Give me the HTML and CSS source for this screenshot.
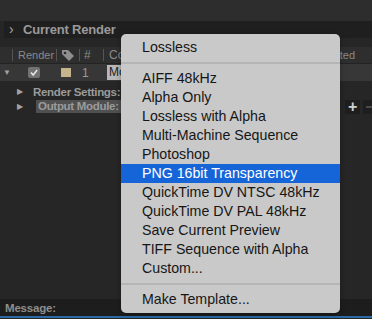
FILE: index.html
```html
<!DOCTYPE html>
<html>
<head>
<meta charset="utf-8">
<link rel="stylesheet" href="styles.css">
</head>
<body>
<div class="app">
  <div class="topstrip"></div>
  <div class="panel-head"><span class="chev">›</span><span class="title">Current Render</span></div>
  <div class="gap"></div>
  <div class="cols">
    <span class="sep s1"></span>
    <span class="col-render">Render</span>
    <span class="sep s2"></span>
    <svg class="tag" width="14" height="12" viewBox="0 0 14 12"><path d="M1 1 H7 L13 7 L8 12 L1 5 Z" fill="#8e8e8e"/><circle cx="4" cy="4" r="1.3" fill="#2c2c2c"/></svg>
    <span class="sep s3"></span>
    <span class="col-num">#</span>
    <span class="sep s4"></span>
    <span class="col-comp">Co</span>
    <span class="fill"></span>
    <span class="col-started">Started</span>
  </div>
  <div class="row1">
    <span class="tri-down">▼</span>
    <span class="check"><svg width="12" height="11" viewBox="0 0 12 11"><path d="M3 5.5 L5.2 8 L9.2 3" fill="none" stroke="#e6e6e6" stroke-width="1.6"/></svg></span>
    <span class="swatch"></span>
    <span class="num">1</span>
    <span class="comp">Mo</span>
  </div>
  <div class="sub first">
    <span class="tri-right">▶</span><span class="label">Render Settings:</span>
  </div>
  <div class="sub">
    <span class="tri-right">▶</span><span class="label hl">Output Module:</span>
    <span class="fill"></span>
    <span class="btn">+</span><span class="btn minus"></span>
  </div>
  <div class="spacer"></div>
  <div class="message"><span>Message:</span></div>
  <div class="blue"></div>
</div>

<div class="menu">
  <div class="item">Lossless</div>
  <div class="divider"></div>
  <div class="item">AIFF 48kHz</div>
  <div class="item">Alpha Only</div>
  <div class="item">Lossless with Alpha</div>
  <div class="item">Multi-Machine Sequence</div>
  <div class="item">Photoshop</div>
  <div class="item selected">PNG 16bit Transparency</div>
  <div class="item">QuickTime DV NTSC 48kHz</div>
  <div class="item">QuickTime DV PAL 48kHz</div>
  <div class="item">Save Current Preview</div>
  <div class="item">TIFF Sequence with Alpha</div>
  <div class="item">Custom...</div>
  <div class="divider"></div>
  <div class="item">Make Template...</div>
</div>
</body>
</html>
```

FILE: styles.css
```css
html, body {
  margin: 0;
  padding: 0;
  width: 372px;
  height: 319px;
  overflow: hidden;
  background: #262626;
}
.app {
  position: relative;
  width: 372px;
  height: 319px;
  display: flex;
  flex-direction: column;
  font-family: "Liberation Sans", Arial, sans-serif;
}
.topstrip {
  height: 21px;
  background: #2d2d2d;
}
.panel-head {
  height: 17px;
  margin-left: 4px;
  background: #1f1f1f;
  display: flex;
  align-items: center;
  color: #9a9a9a;
}
.chev {
  font-size: 14px;
  width: 19px;
  padding-left: 5px;
  box-sizing: border-box;
  color: #a8a8a8;
  line-height: 1;
  margin-top: -2px;
}
.title {
  font-weight: bold;
  font-size: 13px;
  letter-spacing: -0.2px;
}
.gap {
  height: 9px;
  background: #262626;
}
.cols {
  height: 16px;
  background: #2e2e2e;
  display: flex;
  align-items: center;
  color: #8a8a8a;
  font-size: 11px;
  border-bottom: 1px solid #232323;
}
.sep {
  flex: none;
  width: 1px;
  height: 12px;
  background: #555;
}
.s1 { margin-left: 12px; }
.col-render { margin-left: 5px; width: 38px; flex: none; }
.tag { margin-left: 4px; flex: none; }
.s3 { margin-left: 4px; }
.col-num { margin-left: 4px; width: 19px; flex: none; font-size: 12px; }
.col-comp { margin-left: 5px; font-size: 12px; }
.fill { flex: 1; }
.col-started { margin-right: 17px; }
.row1 {
  height: 17px;
  background: #373737;
  display: flex;
  align-items: center;
  font-size: 11px;
  color: #9a9a9a;
}
.tri-down {
  font-size: 8px;
  margin-left: 3px;
  width: 25px;
  color: #a0a0a0;
}
.check {
  width: 12px;
  height: 11px;
  background: #727272;
  border-radius: 2px;
  display: flex;
}
.swatch {
  width: 10px;
  height: 9px;
  background: #c6b48c;
  margin-left: 21px;
}
.num {
  margin-left: 11px;
  width: 14px;
  font-size: 12px;
}
.comp {
  margin-left: 11px;
  background: #b8b8b8;
  color: #222;
  font-size: 12px;
  padding: 0 3px 0 2px;
  height: 15px;
  line-height: 15px;
  width: 40px;
}
.sub {
  height: 15px;
  display: flex;
  align-items: center;
  color: #9b9b9b;
  font-size: 11.5px;
  font-weight: bold;
  letter-spacing: -0.3px;
}
.sub.first { margin-top: 3px; }
.tri-right {
  font-size: 8px;
  margin-left: 17px;
  width: 16px;
  color: #a3a3a3;
  font-weight: normal;
}
.label.hl {
  background: #505050;
  padding: 0 2px;
  margin-left: 3px;
  line-height: 13px;
}
.btn {
  width: 15px;
  height: 14px;
  background: #1e1e1e;
  color: #cfcfcf;
  font-size: 16px;
  line-height: 14px;
  text-align: center;
  font-weight: bold;
  margin-right: 3px;
  position: relative;
}
.btn.minus {
  margin-right: -6px;
}
.btn.minus::after {
  content: "";
  position: absolute;
  left: 3px;
  right: 3px;
  top: 6px;
  height: 2px;
  background: #4a4a4a;
}
.spacer {
  flex: 1;
  background: #262626;
}
.message {
  height: 17px;
  background: #1d1d1d;
  display: flex;
  align-items: center;
  color: #8e8e8e;
  font-size: 11.5px;
  font-weight: bold;
  padding-left: 5px;
  letter-spacing: -0.2px;
}
.blue {
  height: 2px;
  background: #2b6aa6;
  margin-bottom: 1px;
}

.menu {
  position: absolute;
  left: 121px;
  top: 34px;
  width: 219px;
  padding: 4px 0;
  background: #c9c9c9;
  border-radius: 5px;
  box-shadow: 0 1px 5px rgba(0,0,0,0.35);
  font-family: "Liberation Sans", Arial, sans-serif;
  font-size: 14.2px;
  color: #161616;
}
.item {
  height: 19px;
  line-height: 19px;
  padding-left: 21px;
  white-space: nowrap;
}
.item.selected {
  background: #1665d8;
  color: #fff;
}
.divider {
  height: 12px;
  position: relative;
}
.divider::after {
  content: "";
  position: absolute;
  left: 0;
  right: 0;
  top: 5px;
  height: 2px;
  background: #b5b5b5;
}
```
